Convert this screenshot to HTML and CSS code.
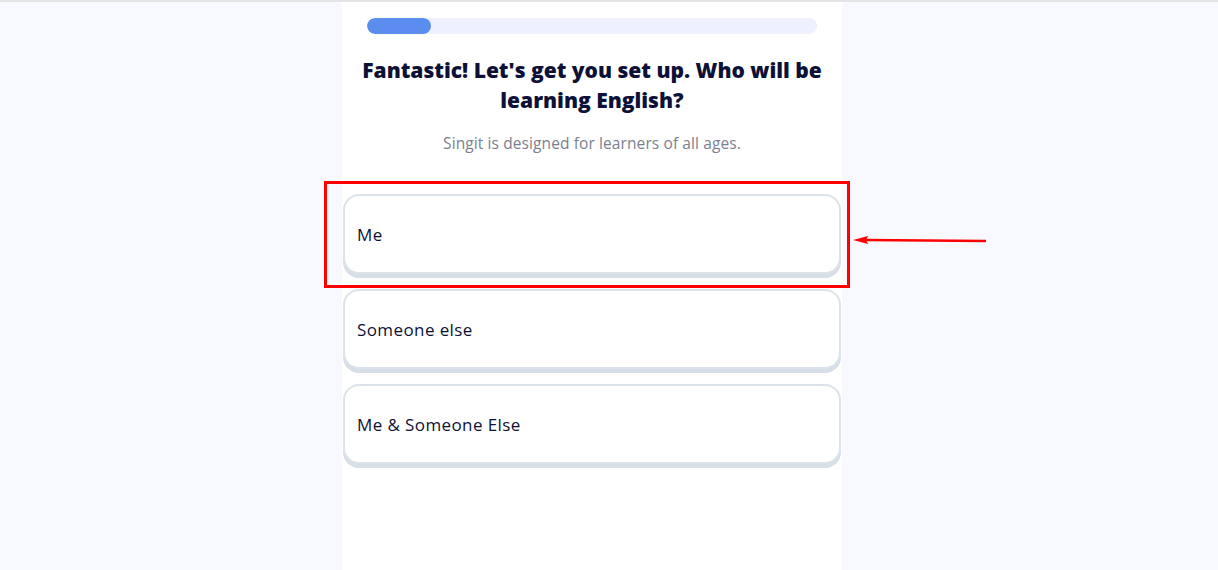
FILE: index.html
```html
<!DOCTYPE html>
<html lang="en">
<head>
<meta charset="utf-8">
<title>Singit onboarding</title>
<link rel="stylesheet" href="styles.css">
</head>
<body>
<div class="page">
  <div class="spacer"></div>
  <main class="panel">
    <div class="progress"><div class="progress-fill" style="width:64px"></div></div>
    <h1 class="title">Fantastic! Let's get you set up. Who will be learning English?</h1>
    <p class="subtitle">Singit is designed for learners of all ages.</p>
    <div class="options">
      <button class="option">Me</button>
      <button class="option">Someone else</button>
      <button class="option">Me &amp; Someone Else</button>
    </div>
  </main>
</div>
<div class="highlight"></div>
<svg class="arrow" width="140" height="12" viewBox="0 0 140 12">
  <line x1="14" y1="6" x2="134" y2="7" stroke="#ff0000" stroke-width="2.5"/>
  <polygon points="1,6 16,2 14,6 16,10" fill="#ff0000"/>
</svg>
</body>
</html>
```
FILE: styles.css
```css
html, body {
  margin: 0;
  padding: 0;
}
body {
  background: #f8f9fe;
  border-top: 2px solid #e4e4e6;
  min-height: 568px;
  font-family: "Open Sans", "Lato", sans-serif;
  color: #0d1137;
  position: relative;
  overflow: hidden;
}
.page {
  display: grid;
  grid-template-columns: 342px 500px 1fr;
  min-height: 568px;
}
.panel {
  background: #ffffff;
  padding: 16px 0 0;
  display: flex;
  flex-direction: column;
  align-items: center;
}
.progress {
  width: 450px;
  height: 16px;
  border-radius: 8px;
  background: #eef0fd;
  overflow: hidden;
}
.progress-fill {
  height: 100%;
  background: #5b8def;
  border-radius: 8px;
}
.title {
  margin: 21px 0 0;
  width: 480px;
  text-align: center;
  font-size: 21px;
  line-height: 30px;
  font-weight: 800;
  color: #0d1137;
}
.subtitle {
  margin: 17px 0 0;
  font-size: 15.5px;
  letter-spacing: 0.1px;
  line-height: 22px;
  color: #7b8090;
}
.options {
  margin-top: 40px;
  width: 498px;
  display: flex;
  flex-direction: column;
  gap: 15px;
}
.option {
  height: 80px;
  box-sizing: border-box;
  border: 2px solid #dbe2ea;
  border-radius: 16px;
  background: #ffffff;
  box-shadow: 0 4px 0 #d6dee7;
  text-align: left;
  padding: 0 12px;
  font-family: inherit;
  font-size: 17px;
  letter-spacing: 0.4px;
  color: #0d1137;
  cursor: pointer;
}
.highlight {
  position: absolute;
  left: 324px;
  top: 179px;
  width: 520px;
  height: 101px;
  border: 3px solid #ff0000;
  pointer-events: none;
}
.arrow {
  position: absolute;
  left: 852px;
  top: 232px;
}
```
